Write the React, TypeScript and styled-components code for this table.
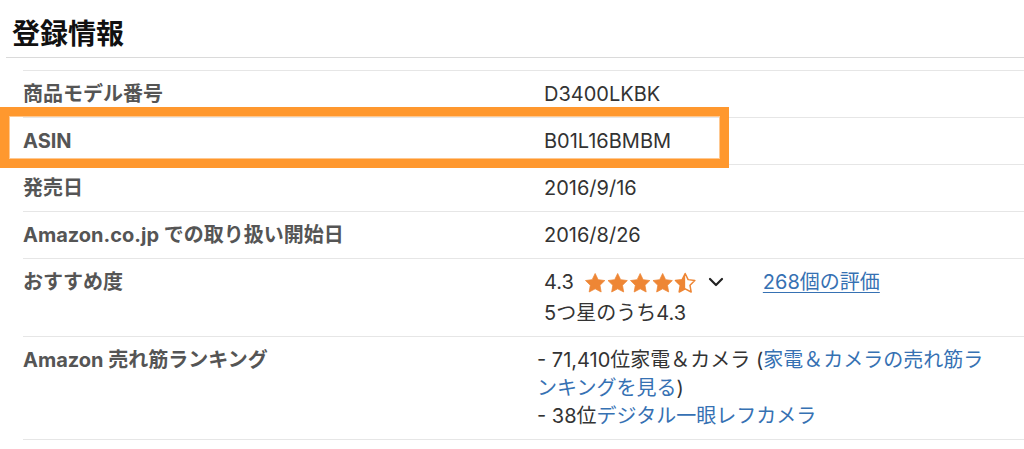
import React from 'react';
import styled, { createGlobalStyle } from 'styled-components';

const Global = createGlobalStyle`
  html, body { margin: 0; padding: 0; background: #fff; }
  body { font-family: Inter, "Noto Sans CJK JP", sans-serif; }
`;

const Page = styled.div`
  width: 1024px;
  height: 449px;
  overflow: hidden;
  background: #fff;
`;

const Header = styled.h2`
  margin: 0 0 0 6px;
  padding: 14px 0 0 6px;
  height: 58px;
  box-sizing: border-box;
  border-bottom: 1px solid #dadada;
  font-size: 28px;
  font-weight: 700;
  line-height: 40px;
  color: #111;
`;

const Table = styled.div`
  margin: 12px 0 0 23px;
  border-top: 1px solid #e6e6e6;
`;

const Row = styled.div`
  position: relative;
  display: grid;
  grid-template-columns: 514px 1fr;
  padding: 9px 24px 9px 0;
  border-bottom: 1px solid #e6e6e6;
  font-size: 20px;
  line-height: 28px;
`;

const Label = styled.div`
  font-weight: 700;
  color: #555;
`;

const Value = styled.div<{ $flush?: boolean }>`
  padding-left: ${(p) => (p.$flush ? '0' : '7px')};
  color: #333;
`;

const Highlight = styled.div`
  position: absolute;
  left: -23px;
  top: -11px;
  width: 729px;
  height: 61px;
  box-sizing: border-box;
  border: 9px solid #ff982e;
  box-shadow: inset 0 0 0 1px #ffc890;
  pointer-events: none;
`;

const RatingLine = styled.div`
  display: flex;
  align-items: center;
  height: 28px;
`;

const Score = styled.span`
  margin-right: 10px;
`;

const Stars = styled.svg`
  display: block;
`;

const Chevron = styled.svg`
  display: block;
  margin-left: 11px;
`;

const Link = styled.a<{ $underline?: boolean }>`
  color: #3671b3;
  text-decoration: ${(p) => (p.$underline ? 'underline' : 'none')};
  text-underline-offset: 3px;
  text-decoration-thickness: 1px;
`;

const RatingLink = styled(Link)`
  margin-left: 39px;
`;

const SubLine = styled.div`
  margin-top: 3px;
  line-height: 28px;
`;

const RankList = styled.ul`
  margin: 0;
  padding: 0;
  list-style: none;
`;

const RankItem = styled.li`
  margin: 0;
`;

const STAR = 'M12 1.6l3.2 6.6 7.2 1-5.2 5.1 1.25 7.2L12 18.1l-6.45 3.4 1.25-7.2L1.6 9.2l7.2-1z';

function StarRow({ value }: { value: number }) {
  const pitch = 22.5;
  return (
    <Stars width={113} height={21} viewBox="0 0 113 21">
      <defs>
        <clipPath id="halfclip">
          <rect x="0" y="0" width="12" height="24" />
        </clipPath>
      </defs>
      {[0, 1, 2, 3, 4].map((i) => {
        const fill = value - i;
        return (
          <g key={i} transform={`translate(${i * pitch} 0) scale(0.93)`}>
            {fill >= 0.75 ? (
              <path d={STAR} fill="#ee8635" stroke="#ee8635" strokeWidth="0.8" strokeLinejoin="round" />
            ) : (
              <>
                <path d={STAR} fill="none" stroke="#ee8635" strokeWidth="1.6" strokeLinejoin="round" />
                {fill > 0.25 && <path d={STAR} fill="#ee8635" clipPath="url(#halfclip)" />}
              </>
            )}
          </g>
        );
      })}
    </Stars>
  );
}

export default function App() {
  return (
    <Page>
      <Global />
      <Header>登録情報</Header>
      <Table>
        <Row>
          <Label>商品モデル番号</Label>
          <Value>D3400LKBK</Value>
        </Row>
        <Row>
          <Highlight />
          <Label>ASIN</Label>
          <Value>B01L16BMBM</Value>
        </Row>
        <Row>
          <Label>発売日</Label>
          <Value>2016/9/16</Value>
        </Row>
        <Row>
          <Label>Amazon.co.jp での取り扱い開始日</Label>
          <Value>2016/8/26</Value>
        </Row>
        <Row>
          <Label>おすすめ度</Label>
          <Value>
            <RatingLine>
              <Score>4.3</Score>
              <StarRow value={4.3} />
              <Chevron width={16} height={10} viewBox="0 0 16 10">
                <polyline points="2,2 8,8 14,2" fill="none" stroke="#222" strokeWidth="2.2" strokeLinecap="round" strokeLinejoin="round" />
              </Chevron>
              <RatingLink $underline href="#">268個の評価</RatingLink>
            </RatingLine>
            <SubLine>5つ星のうち4.3</SubLine>
          </Value>
        </Row>
        <Row>
          <Label>Amazon 売れ筋ランキング</Label>
          <Value $flush>
            <RankList>
              <RankItem>
                - 71,410位家電＆カメラ (<Link href="#">家電＆カメラの売れ筋ランキングを見る</Link>)
              </RankItem>
              <RankItem>
                - 38位<Link href="#">デジタル一眼レフカメラ</Link>
              </RankItem>
            </RankList>
          </Value>
        </Row>
      </Table>
    </Page>
  );
}
